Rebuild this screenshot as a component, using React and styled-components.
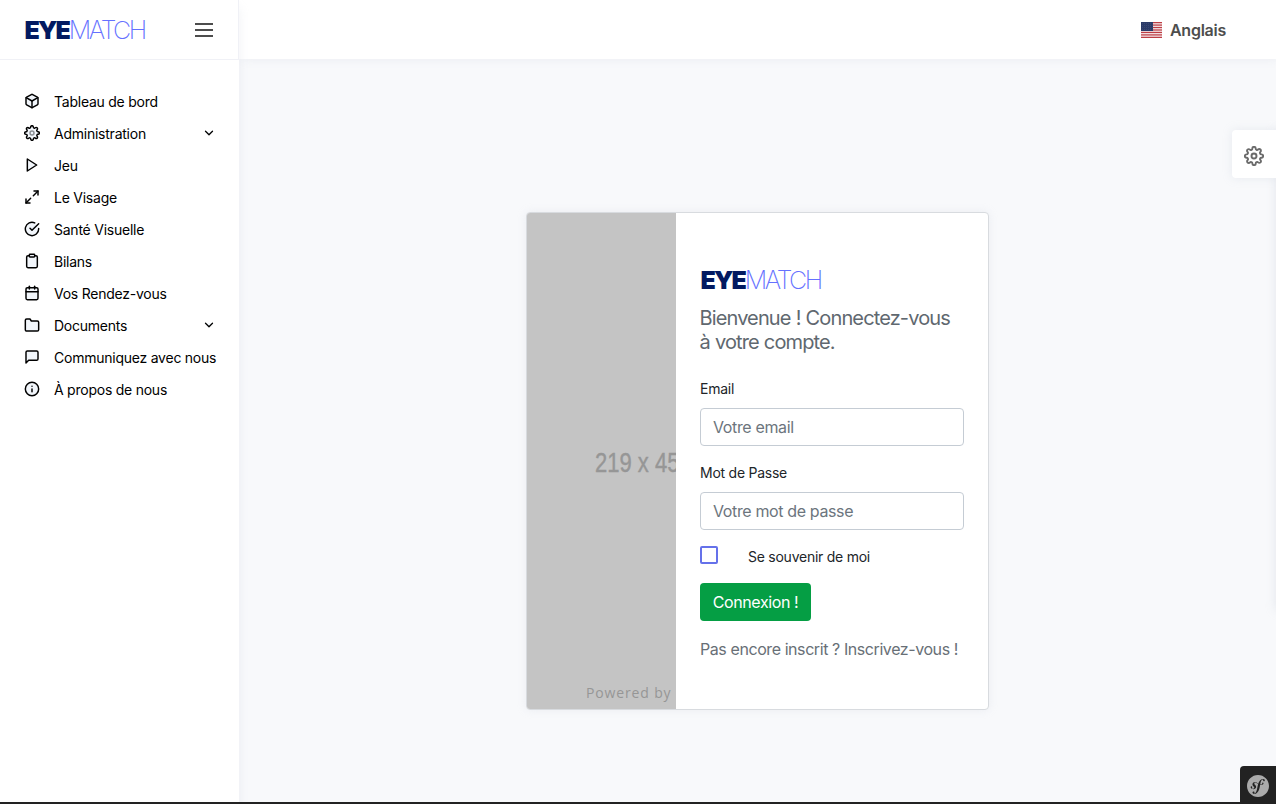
import React from "react";
import styled, { createGlobalStyle } from "styled-components";
import {
  FiBox, FiSettings, FiPlay, FiMaximize2, FiCheckCircle, FiClipboard,
  FiCalendar, FiFolder, FiMessageSquare, FiInfo, FiChevronDown,
} from "react-icons/fi";
import { SiSymfony } from "react-icons/si";

const GlobalStyle = createGlobalStyle`
  *, *::before, *::after { box-sizing: border-box; }
  body { margin: 0; font-family: Inter, "Liberation Sans", sans-serif; font-size: 14px; color: #212529; background: #f9fafb; }
`;

const Page = styled.div`
  position: relative;
  display: flex;
  width: 100%;
  height: 804px;
  overflow: hidden;
  background: #f8f9fb;
`;

const Sidebar = styled.aside`
  position: relative;
  z-index: 2;
  width: 239px;
  flex: none;
  background: #fff;
  box-shadow: 0 8px 10px 0 rgba(183, 192, 206, 0.2);
`;

const SidebarHeader = styled.header`
  display: flex;
  align-items: center;
  justify-content: space-between;
  height: 60px;
  padding: 0 25px 0 24px;
  border-bottom: 1px solid #f0f1f6;
  border-right: 1px solid #f0f1f6;
`;

const Logo = styled.div`
  padding-left: 0.5px;
  font-size: 25px;
  line-height: 30px;
  font-weight: 250;
  letter-spacing: -2.45px;
  color: #6571ff;
  white-space: nowrap;

  b {
    font-weight: 900;
    letter-spacing: -1.9px;
    color: #031a61;
  }
`;

const Burger = styled.button`
  display: flex;
  flex-direction: column;
  justify-content: space-between;
  width: 18px;
  height: 14px;
  padding: 0;
  border: 0;
  background: none;

  span { height: 2px; background: #4d4d4d; }
`;

const Nav = styled.nav`
  display: flex;
  flex-direction: column;
  padding: 25px 23px 0 24px;
`;

const NavItem = styled.a`
  display: flex;
  align-items: center;
  height: 32px;
  color: #000;

  svg { flex: none; fill: rgba(233, 240, 249, 0.6); stroke-width: 2.2; }
`;

const NavLabel = styled.span`
  flex: 1;
  padding-left: 14px;
  white-space: nowrap;
  letter-spacing: -0.24px;
`;

const Main = styled.div`
  display: flex;
  flex: 1;
  flex-direction: column;
`;

const Navbar = styled.header`
  display: flex;
  align-items: center;
  justify-content: flex-end;
  gap: 8px;
  flex: none;
  height: 59px;
  padding: 0 50px 0 0;
  background: #fff;
  box-shadow: 3px 0 10px 0 rgba(183, 192, 206, 0.2);
  font-size: 16px;
  font-weight: 600;
  color: #4d4d4d;
`;

const Language = styled.span`
  letter-spacing: -0.25px;
`;

const Content = styled.main`
  display: flex;
  flex: 1;
  align-items: flex-start;
  justify-content: center;
  padding-top: 153px;
`;

const Card = styled.section`
  display: flex;
  width: 463px;
  height: 498px;
  border: 1px solid #d8dbdf;
  border-radius: 4px;
  background: #fff;
  box-shadow: 0 0 10px 0 rgba(183, 192, 206, 0.2);
  overflow: hidden;
`;

const Placeholder = styled.div`
  display: flex;
  flex-direction: column;
  justify-content: space-between;
  width: 149px;
  flex: none;
  padding: 234px 0 7px;
  overflow: hidden;
  background: #c4c4c4;
  color: #969696;
  white-space: nowrap;
`;

const Dimensions = styled.span`
  padding-left: 68px;
  font: 27px/32px "Liberation Sans", sans-serif;
  -webkit-text-stroke: 0.4px #969696;
  transform: scaleX(0.815);
  transform-origin: 68px 0;
`;

const Powered = styled.span`
  padding-left: 59px;
  font: 14px/18px "Open Sans", sans-serif;
  letter-spacing: 0.85px;
`;

const Form = styled.form`
  display: flex;
  flex: 1;
  flex-direction: column;
  align-items: flex-start;
  padding: 52px 24px 0;
`;

const Welcome = styled.h5`
  margin: 11px 0 0 -0.5px;
  font-size: 20px;
  line-height: 24px;
  font-weight: 400;
  letter-spacing: -0.87px;
  word-spacing: 0.3px;
  color: #60686f;
  white-space: nowrap;
`;

const Label = styled.label`
  margin-top: ${(p) => p.$top};
  line-height: 21px;
  letter-spacing: -0.25px;
`;

const Input = styled.input`
  width: 264px;
  height: 38px;
  margin: 9px 0 0;
  padding: 0 12px 1px;
  border: 1px solid #c5ccd4;
  border-radius: 4px;
  background: #fff;
  font: 16px Inter, sans-serif;
  letter-spacing: -0.37px;

  &::placeholder { color: #6c757d; opacity: 1; }
`;

const Remember = styled.label`
  display: flex;
  align-items: flex-start;
  gap: 30px;
  height: 21px;
  margin-top: 16px;
  line-height: 21px;
  letter-spacing: -0.25px;
`;

const Checkbox = styled.span`
  width: 18px;
  height: 18px;
  border: 2px solid #6571ea;
  border-radius: 2px;
`;

const Submit = styled.button`
  width: 111px;
  height: 38px;
  margin-top: 16px;
  padding: 0 0 1px;
  border: 0;
  border-radius: 4px;
  background: #059e44;
  color: #fff;
  font: 16px Inter, sans-serif;
  letter-spacing: -0.4px;
`;

const Register = styled.a`
  margin-top: 16px;
  font-size: 16px;
  line-height: 24px;
  letter-spacing: -0.42px;
  color: #686f76;
  white-space: nowrap;
`;

const SettingsPanel = styled.div`
  position: absolute;
  top: 130px;
  left: 100%;
  z-index: 3;
  width: 240px;
  height: 480px;
  box-shadow: 0 0 10px 0 rgba(183, 192, 206, 0.3);
`;

const SettingsTab = styled.button`
  position: absolute;
  top: 130px;
  right: 0;
  z-index: 4;
  display: flex;
  align-items: center;
  justify-content: center;
  width: 44px;
  height: 48px;
  padding: 4px 0 0;
  border: 0;
  border-radius: 4px 0 0 4px;
  background: #fff;
  color: #6b6b6b;
  box-shadow: 0 0 10px 0 rgba(183, 192, 206, 0.25);

  svg { stroke-width: 2.3; }
`;

const DebugLine = styled.div`
  position: absolute;
  bottom: 0;
  left: 0;
  right: 0;
  z-index: 5;
  height: 2px;
  background: #222;
`;

const DebugBadge = styled.button`
  position: absolute;
  right: 0;
  bottom: 0;
  z-index: 6;
  display: flex;
  padding: 9px 7px;
  width: 36px;
  height: 38px;
  border: 0;
  border-radius: 4px 0 0 0;
  background: #222;
  color: #aaa;
`;

const items = [
  { icon: FiBox, label: "Tableau de bord" },
  { icon: FiSettings, label: "Administration", open: true },
  { icon: FiPlay, label: "Jeu" },
  { icon: FiMaximize2, label: "Le Visage" },
  { icon: FiCheckCircle, label: "Santé Visuelle" },
  { icon: FiClipboard, label: "Bilans" },
  { icon: FiCalendar, label: "Vos Rendez-vous" },
  { icon: FiFolder, label: "Documents", open: true },
  { icon: FiMessageSquare, label: "Communiquez avec nous" },
  { icon: FiInfo, label: "À propos de nous" },
];

function Brand() {
  return <Logo><b>EYE</b>MATCH</Logo>;
}

function Flag() {
  return (
    <svg width="21" height="16" viewBox="0 0 21 16">
      <rect width="21" height="16" fill="#f5e9eb" />
      {[0, 1, 2, 3, 4, 5, 6].map((n) => (
        <rect key={n} y={n * 2.46} width="21" height="1.23" fill="#bd3d44" />
      ))}
      <rect width="12" height="9" fill="#2b3b68" />
      {[1.5, 3.5, 5.5, 7.5].map((y) => (
        <line key={y} x1="1" x2="11.5" y1={y} y2={y} stroke="#596489" strokeWidth=".5" strokeDasharray=".7 1.3" />
      ))}
    </svg>
  );
}

export default function App() {
  return (
    <Page>
      <GlobalStyle />
      <Sidebar>
        <SidebarHeader>
          <Brand />
          <Burger aria-label="Menu"><span /><span /><span /></Burger>
        </SidebarHeader>
        <Nav>
          {items.map(({ icon: Icon, label, open }) => (
            <NavItem key={label}>
              <Icon size={16} />
              <NavLabel>{label}</NavLabel>
              {open && <FiChevronDown size={14} />}
            </NavItem>
          ))}
        </Nav>
      </Sidebar>
      <Main>
        <Navbar>
          <Flag />
          <Language>Anglais</Language>
        </Navbar>
        <Content>
          <Card>
            <Placeholder>
              <Dimensions>219 x 45</Dimensions>
              <Powered>Powered by</Powered>
            </Placeholder>
            <Form>
              <Brand />
              <Welcome>Bienvenue ! Connectez-vous<br />à votre compte.</Welcome>
              <Label $top="24px">Email</Label>
              <Input placeholder="Votre email" />
              <Label $top="16px">Mot de Passe</Label>
              <Input type="password" placeholder="Votre mot de passe" />
              <Remember><Checkbox />Se souvenir de moi</Remember>
              <Submit type="button">Connexion !</Submit>
              <Register>Pas encore inscrit ? Inscrivez-vous !</Register>
            </Form>
          </Card>
        </Content>
      </Main>
      <SettingsPanel />
      <SettingsTab aria-label="Paramètres"><FiSettings size={20} /></SettingsTab>
      <DebugLine />
      <DebugBadge aria-label="Symfony"><SiSymfony size={22} /></DebugBadge>
    </Page>
  );
}
